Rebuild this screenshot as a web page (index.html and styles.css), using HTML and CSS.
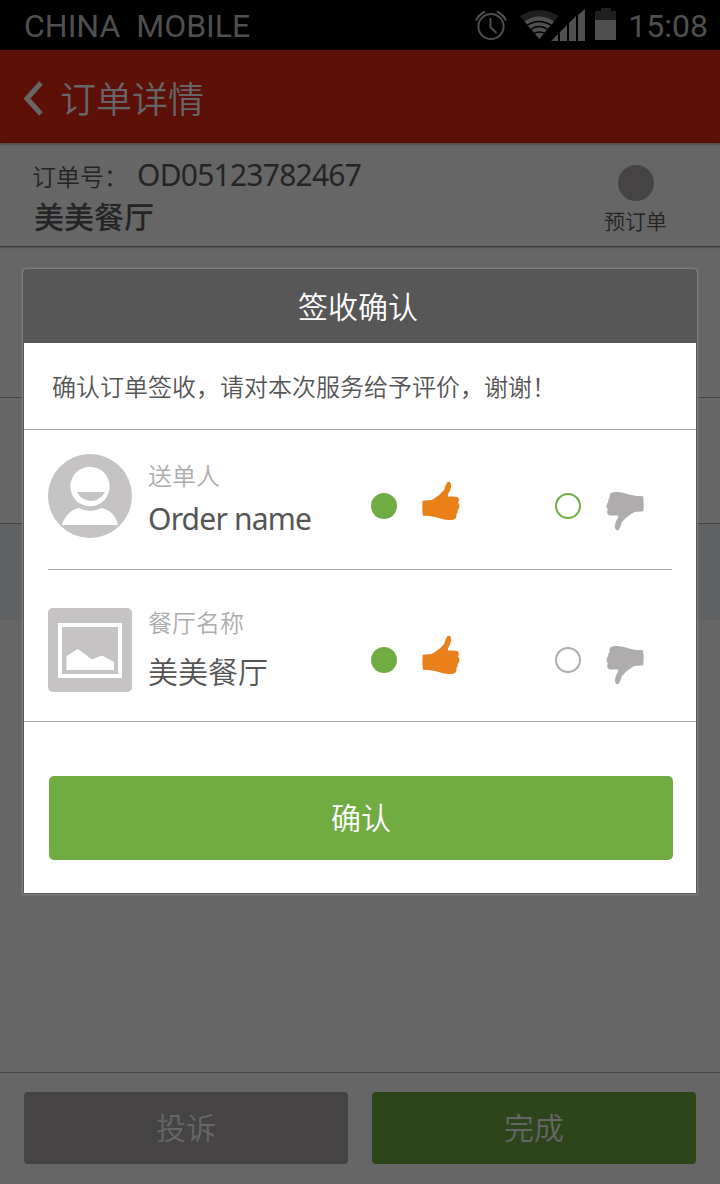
FILE: index.html
```html
<!DOCTYPE html>
<html lang="zh-CN">
<head>
<meta charset="utf-8">
<title>订单详情</title>
<link rel="stylesheet" href="styles.css">
</head>
<body>
<svg class="defs" aria-hidden="true">
  <symbol id="thumb" viewBox="0 0 40 40">
    <path d="M1.7 19.7L10.500 18.900Q13 18 15 16.200L19 13.300L23.200 8.800L24.700 4L26.300 1.300Q28.300 0 29.400 1.800Q30.600 4 30 6.300L28.800 10L26.900 13.300V15.500H32.500Q37 15.500 37.600 17.300Q38.300 20 37 21.700Q38.800 22.800 38.400 25.200Q38.200 28 36.600 29Q37.400 31.200 35.400 33.200Q35.800 37 33.600 38.200Q31 39.300 27 39L22 38.300L14 36Q8 34.800 1.900 34.700Q.8 27 1.700 19.700Z" fill="currentColor"/>
  </symbol>
</svg>
<div class="screen">
  <header class="status">
    <span class="carrier">CHINA&nbsp; MOBILE</span>
    <span class="status-icons">
      <svg class="alarm" viewBox="0 0 32 34" width="32" height="34">
        <g fill="none" stroke="#4f4f4f" stroke-width="2">
          <circle cx="16" cy="18.500" r="12.600"/>
          <path d="M15.500 10V19L21.500 25"/>
          <path d="M1 12.500Q3.500 7 10 3.500M31 12.500Q28.500 7 22 3.500"/>
        </g>
      </svg>
      <svg class="signal" viewBox="0 0 66 34" width="66" height="34">
        <path d="M0 9Q19 -3 38.500 9L19.300 32Z" fill="#1f1f1f"/>
        <path d="M4.500 14.500Q19 4.500 34 14.500L19.300 32Z" fill="#4f4f4f"/>
        <g fill="none" stroke="#000" stroke-width="1.500"><path d="M7 18.500Q19 10.500 31.500 18.500M10.500 22.500Q19 16.500 28 22.500M14 26.500Q19 23.500 24.800 26.500"/></g>
        <path d="M31 34L38 27V34ZM40 34V25L47 18V34ZM49 34V16L56 9V34ZM58 34V8L65 2V34Z" fill="#4f4f4f"/>
      </svg>
      <svg class="battery" viewBox="0 0 22 32" width="22" height="32">
        <path d="M0 3H6V0H16V3H21V12H0Z" fill="#1f1f1f"/><path d="M0 12H21V32H0Z" fill="#4f4f4f"/>
      </svg>
    </span>
    <span class="clock">15:08</span>
  </header>
  <nav class="titlebar">
    <svg class="back" viewBox="0 0 19 35" width="19" height="35"><path d="M17 2L3 17.500L17 33" fill="none" stroke="#666" stroke-width="5"/></svg>
    <h1 class="title">订单详情</h1>
  </nav>
  <section class="order">
    <div class="order-main">
      <div class="order-line"><span class="order-label">订单号：</span><span class="order-number">OD05123782467</span></div>
      <div class="order-shop">美美餐厅</div>
    </div>
    <div class="order-kind"><i class="kind-dot"></i><span>预订单</span></div>
  </section>
  <main class="content">
    <div class="block block-a"></div>
    <div class="block block-b"></div>
    <div class="block block-c"></div>
  </main>
  <footer class="footer">
    <button class="foot-btn complain">投诉</button>
    <button class="foot-btn done">完成</button>
  </footer>

  <div class="dialog" role="dialog">
    <h2 class="dialog-title">签收确认</h2>
    <p class="dialog-text">确认订单签收，请对本次服务给予评价，谢谢！</p>
    <div class="rating">
      <svg class="avatar" viewBox="0 0 84 84" width="84" height="84">
        <circle cx="42" cy="42" r="42" fill="#c5c3c4"/>
        <path d="M14 71C17 61 23 56 31 54Q42 60 53.500 54C62 56 67.500 61 70 71Z" fill="#fff"/>
        <circle cx="42" cy="32.500" r="19.700" fill="#fff"/>
        <path d="M29 38H57Q52 47 42.500 47Q33 46 29 38Z" fill="#c5c3c4"/>
      </svg>
      <div class="who"><span class="role">送单人</span><span class="name">Order name</span></div>
      <i class="radio on"></i>
      <svg class="thumb up"><use href="#thumb"/></svg>
      <i class="radio off"></i>
      <svg class="thumb down"><use href="#thumb"/></svg>
    </div>
    <div class="rating second">
      <svg class="avatar" viewBox="0 0 84 84" width="84" height="84">
        <rect width="84" height="84" rx="5" fill="#c5c3c4"/>
        <rect x="12" y="17" width="60" height="51" fill="none" stroke="#fff" stroke-width="4"/>
        <path d="M18.500 48L30 41L44 51.500L54 47.500L66 54V62H18.500Z" fill="#fff"/>
      </svg>
      <div class="who"><span class="role">餐厅名称</span><span class="name cjk">美美餐厅</span></div>
      <i class="radio on"></i>
      <svg class="thumb up"><use href="#thumb"/></svg>
      <i class="radio off muted"></i>
      <svg class="thumb down"><use href="#thumb"/></svg>
    </div>
    <div class="dialog-actions"><button class="confirm">确认</button></div>
  </div>
</div>
</body>
</html>
```
FILE: styles.css
```css
* { box-sizing: border-box; }
body { margin: 0; font-family: "Noto Sans", "Noto Sans CJK SC", sans-serif; background: #666; }
button { border: 0; padding: 0; font-family: "Noto Sans CJK SC", sans-serif; font-weight: 350; }
h1, h2, p { margin: 0; }
svg, i { flex: none; display: block; }
.defs { position: absolute; width: 0; height: 0; }
.screen { position: relative; display: flex; flex-direction: column; width: 720px; height: 1184px; overflow: hidden; }

.status { display: flex; align-items: center; height: 50px; padding: 0 12px 0 24px; background: #000; color: #4f4f4f; font: 32px/50px Roboto, sans-serif; }
.carrier { padding-top: 2px; white-space: nowrap; }
.status-icons { display: flex; margin-left: auto; height: 50px; }
.alarm { margin-top: 8px; }
.signal { margin: 7px 0 0 13px; }
.battery { margin: 8px 0 0 9px; }
.clock { margin-left: 11px; padding-top: 2px; }

.titlebar { display: flex; align-items: center; height: 93px; padding-left: 24px; background: #5c1008; color: #666; flex: none; }
.back { margin-top: 4px; }
.title { margin-left: 17px; font: 350 36px/50px "Noto Sans CJK SC", sans-serif; white-space: nowrap; }

.order { display: flex; justify-content: space-between; flex: none; height: 104px; padding: 15px 53px 0 32px; border-bottom: 1px solid #3c3c3c; color: #242424; box-shadow: inset 0 3px 2px -1px #505050, 0 1px 1px #555; }
.order-line { display: flex; height: 39px; line-height: 34px; white-space: nowrap; }
.order-label { width: 105px; padding-top: 1px; font: 350 24px/34px "Noto Sans CJK SC", sans-serif; }
.order-number { font-size: 30px; letter-spacing: -0.770px; }
.order-shop { margin: -2px 0 0 2px; font: 500 30px/40px "Noto Sans CJK SC", sans-serif; }
.order-kind { display: flex; flex-direction: column; align-items: center; padding-top: 7px; font: 350 21px/30px "Noto Sans CJK SC", sans-serif; }
.kind-dot { width: 36px; height: 36px; margin-bottom: 4px; border-radius: 50%; background: #464344; }

.content { flex: 1; }
.block-a { height: 151px; border-bottom: 1px solid #444; }
.block-b { height: 126px; border-bottom: 1px solid #444; }
.block-c { height: 96px; background: #5f6163; }

.footer { display: grid; grid-template-columns: 1fr 1fr; gap: 24px; flex: none; height: 112px; padding: 19px 24px 20px; border-top: 1px solid #444; }
.foot-btn { padding-bottom: 3px; border-radius: 4px; color: #666; font-size: 30px; line-height: 69px; }
.complain { background: #464344; }
.done { background: #2d451a; }

.dialog { position: absolute; left: 23px; top: 269px; width: 674px; height: 625px; border: 1px solid #575757; border-radius: 3px 3px 0 0; background: #fff; box-shadow: 0 0 2px 1px #858585; }
.dialog-title { height: 73px; padding-right: 4px; background: #575757; color: #fff; font: 350 30px/70px "Noto Sans CJK SC", sans-serif; text-align: center; }
.dialog-text { height: 87px; padding-left: 28px; border-bottom: 1px solid #aaa; color: #555; font: 350 24px/86px "Noto Sans CJK SC", sans-serif; white-space: nowrap; }
.rating { display: flex; align-items: flex-start; height: 140px; margin: 0 24px; padding-top: 24px; border-bottom: 1px solid #aaa; }
.second { height: 152px; margin: 0; padding: 38px 24px 0; }
.who { display: flex; flex-direction: column; width: 239px; padding-left: 16px; white-space: nowrap; }
.role { height: 43px; color: #afacad; font: 350 24px/42px "Noto Sans CJK SC", sans-serif; }
.second .role { line-height: 28px; }
.name { color: #555; font-size: 30px; line-height: 43px; letter-spacing: -0.800px; }
.name.cjk { font-family: "Noto Sans CJK SC", sans-serif; font-weight: 350; line-height: 39px; letter-spacing: 0; }
.radio { width: 26px; height: 26px; margin-top: 39px; border-radius: 50%; }
.on { background: #71ac43; }
.off { margin-left: 94px; border: 2px solid #71ac43; }
.muted { border-color: #afacad; }
.thumb { width: 40px; height: 40px; }
.up { margin: 27px 0 0 24px; color: #e98019; }
.down { margin: 37px 0 0 24px; color: #afacad; transform: rotate(180deg); }
.dialog-actions { padding: 54px 23px 0 25px; }
.confirm { display: block; width: 624px; height: 84px; padding-bottom: 4px; border-radius: 5px; background: #71ac43; color: #fff; font-size: 30px; line-height: 80px; }
```
